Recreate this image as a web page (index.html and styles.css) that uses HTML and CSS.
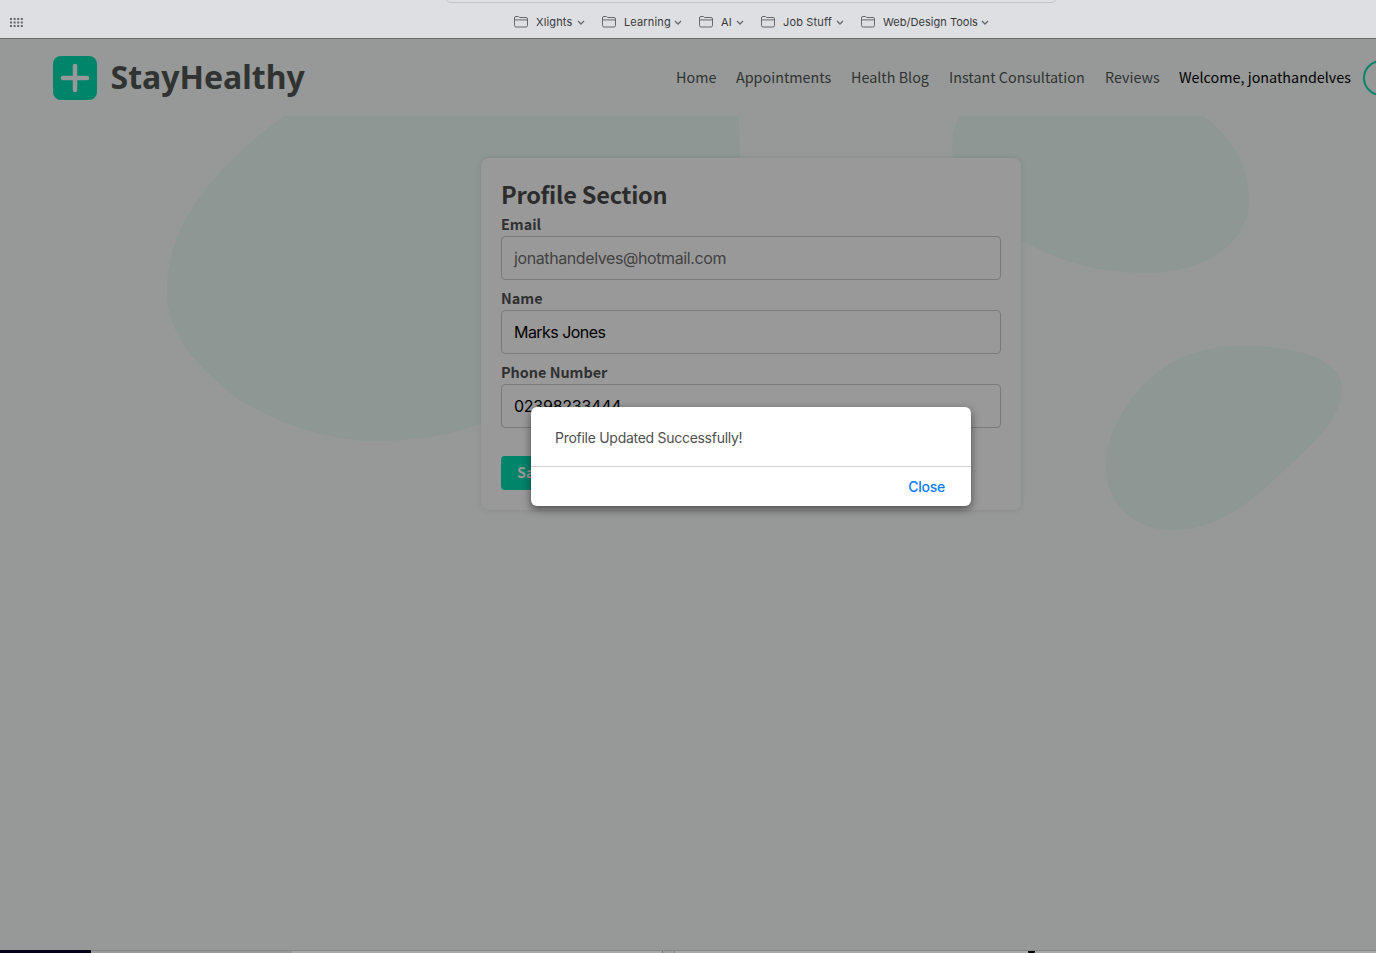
FILE: index.html
```html
<!DOCTYPE html>
<html lang="en">
<head>
<meta charset="utf-8">
<title>StayHealthy</title>
<link rel="stylesheet" href="styles.css">
</head>
<body>
<svg class="symbols" width="0" height="0">
  <symbol id="folder" viewBox="0 0 14 12"><path d="M.5 9.500V2Q.5.5 2 .5h2.200q.6 0 1 .5l.4.5H12q1.500 0 1.500 1.500v6.500q0 1.500-1.500 1.500H2Q.5 11 .5 9.500zM.5 3.900h13"/></symbol>
  <symbol id="chevron" viewBox="0 0 8 5"><path d="M1 1l3 3 3-3"/></symbol>
</svg>
<div class="bookmarks">
  <div class="address-edge"></div>
  <svg class="grid-icon" viewBox="0 0 13 9" width="13" height="9"><path d="M0 1h13M0 4.500h13M0 8h13"/></svg>
  <div class="bookmark-list">
    <div class="bookmark b1"><svg class="folder"><use href="#folder"/></svg><span>Xlights</span><svg class="chevron"><use href="#chevron"/></svg></div>
    <div class="bookmark b2"><svg class="folder"><use href="#folder"/></svg><span>Learning</span><svg class="chevron"><use href="#chevron"/></svg></div>
    <div class="bookmark b3"><svg class="folder"><use href="#folder"/></svg><span>AI</span><svg class="chevron"><use href="#chevron"/></svg></div>
    <div class="bookmark b4"><svg class="folder"><use href="#folder"/></svg><span>Job Stuff</span><svg class="chevron"><use href="#chevron"/></svg></div>
    <div class="bookmark b5"><svg class="folder"><use href="#folder"/></svg><span>Web/Design Tools</span><svg class="chevron"><use href="#chevron"/></svg></div>
  </div>
</div>
<header class="header">
  <div class="brand">
    <svg width="44" height="44" viewBox="0 0 44 44"><rect width="44" height="44" rx="8" fill="#00846a"/><path d="M22 10v24M10 22h24" stroke="#969998" stroke-width="4.500" stroke-linecap="round"/></svg>
    <span class="brand-name">StayHealthy</span>
  </div>
  <nav class="nav">
    <a class="n1">Home</a><a class="n2">Appointments</a><a class="n3">Health Blog</a><a class="n4">Instant Consultation</a><a class="n5">Reviews</a><a class="n6">Welcome, jonathandelves</a>
    <svg class="logout" width="13" height="36" viewBox="0 0 13 36"><circle cx="18" cy="18" r="17"/></svg>
  </nav>
</header>
<main class="page">
  <svg class="blobs" viewBox="0 116 1376 834" width="1376" height="834">
    <path d="M284 116H738.500C741 165 740 195 731 224C700 315 590 380 481 424C450 435 415 441 376 441C325 441 275 421 240 400C195 366 167 335 167 290C167 222 218 165 284 116Z"/>
    <path d="M960 116H1203C1231 136 1249 165 1249 200C1249 243 1205 273 1147 273C1090 273 1050 256 1021 240C950 205 943 145 960 116Z"/>
    <path d="M1244 346C1299 346 1342 360 1342 389C1342 420 1309 447 1280 474C1251 503 1215 530 1173 530C1132 530 1106 502 1106 466C1106 425 1139 379 1177 360C1198 350 1221 346 1244 346Z"/>
  </svg>
  <section class="card">
    <h1>Profile Section</h1>
    <label>Email</label>
    <div class="field muted"><span class="f-email">jonathandelves@hotmail.com</span></div>
    <label>Name</label>
    <div class="field"><span class="f-name">Marks Jones</span></div>
    <label>Phone Number</label>
    <div class="field"><span class="f-phone">02398233444</span></div>
    <button class="save">Save</button>
  </section>
</main>
<div class="dialog">
  <div class="message">Profile Updated Successfully!</div>
  <div class="actions">Close</div>
</div>
<footer class="underlay"><i class="u1"></i><i class="u2"></i><i class="u3"></i><i class="u4"></i><i class="u5"></i><i class="u6"></i></footer>
</body>
</html>
```
FILE: styles.css
```css
* { box-sizing: border-box; }
body {
  margin: 0;
  width: 1376px;
  height: 953px;
  overflow: hidden;
  display: flex;
  flex-direction: column;
  background: #969998;
  font-family: "Noto Sans CJK SC", "Open Sans", sans-serif;
  color: #303331;
}
.symbols { position: absolute; }
.bookmarks {
  position: relative;
  height: 39px;
  flex: none;
  display: flex;
  background: #dedfe2;
  border-bottom: 1px solid #6c716f;
  font: 400 11px/14px Inter, sans-serif;
  color: #38393c;
}
.address-edge {
  position: absolute;
  left: 444px;
  top: -17px;
  width: 614px;
  height: 20px;
  border: 1px solid #c3c4c7;
  border-radius: 7px;
}
.grid-icon {
  margin: 18px 0 0 10px;
  stroke: #65666b;
  stroke-width: 2;
  stroke-dasharray: 2 1.600;
}
.bookmark-list { display: flex; margin: 15px 0 0 491px; }
.bookmark { display: flex; align-items: center; height: 14px; white-space: nowrap; }
.bookmark span { margin-left: 8px; flex: 1; letter-spacing: .15px; }
.bookmark svg { fill: none; stroke: #67686b; flex: none; }
.folder { width: 14px; height: 12px; }
.bookmark .chevron { width: 8px; height: 5px; stroke-width: 1.300; }
.b1 { width: 71px; margin-right: 17px; }
.b2 { width: 80px; margin-right: 17px; }
.b3 { width: 45px; margin-right: 17px; }
.b4 { width: 83px; margin-right: 17px; }
.b5 { width: 128px; }
.b5 span { letter-spacing: .03px; }
.header {
  height: 77px;
  flex: none;
  display: flex;
  align-items: center;
  justify-content: space-between;
  padding-left: 53px;
}
.brand { display: flex; align-items: center; gap: 14px; }
.brand-name { font: 700 32px/44px "Noto Sans", sans-serif; padding-bottom: 2px; margin-left: -.5px; }
.nav { display: flex; align-items: center; font-size: 14.35px; line-height: 24px; white-space: nowrap; }
.nav a { flex: none; margin-right: 20px; padding-bottom: 1px; }
.n1 { width: 40px; }
.n2 { width: 95px; }
.n3 { width: 78px; }
.n4 { width: 136px; }
.n5 { width: 54px; }
.nav .n6 { width: 172px; margin-right: 12px; color: #000; }
.logout { flex: none; fill: none; stroke: #00846a; stroke-width: 2; }
.page { position: relative; height: 834px; flex: none; padding: 42px 0 0 481px; }
.blobs { position: absolute; inset: 0; fill: #8d9793; }
.card {
  position: relative;
  width: 540px;
  height: 352px;
  padding: 20px;
  background: #999;
  border-radius: 8px;
  box-shadow: 0 0 6px rgba(0, 0, 0, .1);
}
h1 { margin: 0; height: 35px; font-size: 23.5px; line-height: 33px; letter-spacing: -.22px; font-weight: 700; color: #2c2c2d; }
label { display: block; height: 22px; font-size: 14.4px; line-height: 21px; font-weight: 700; color: #303031; }
h1 + label { height: 23px; }
.field {
  height: 44px;
  margin-bottom: 7px;
  padding: 0 12px;
  border: 1px solid #7a7a7a;
  border-radius: 4px;
  font: 16px/42px Inter, sans-serif;
  color: #000;
}
.field + label { height: 23px; }
.muted { color: #424242; }
.f-email { letter-spacing: -.4px; }
.f-name { letter-spacing: -.55px; }
.f-phone { letter-spacing: -.25px; }
.save {
  display: block;
  margin-top: 28px;
  width: 70px;
  height: 34px;
  padding: 0 0 2px 16px;
  border: 0;
  border-radius: 4px;
  background: #00846a;
  color: #999;
  text-align: left;
  font: 700 14.4px/32px "Noto Sans CJK SC", sans-serif;
}
.dialog {
  position: absolute;
  left: 531px;
  top: 407px;
  width: 440px;
  height: 99px;
  border-radius: 6px;
  background: #fff;
  box-shadow: 0 3px 8px rgba(0, 0, 0, .5);
  font: 14px/20px Inter, sans-serif;
}
.message { height: 60px; padding: 21px 24px 0; border-bottom: 1px solid #d0d1d1; color: #505050; letter-spacing: -.28px; }
.actions { padding: 10px 26px 0; text-align: right; color: #087cf0; font-weight: 500; letter-spacing: -.25px; }
.underlay { height: 3px; flex: none; display: flex; background: #aaa; border-top: 1px solid #858786; }
.underlay i { height: 3px; }
.u1 { width: 91px; background: #030019; margin-top: -1px; }
.u2 { width: 201px; background: #989a9b; }
.u3 { width: 370px; background: #aaa; }
.u4 { width: 13px; background: #a0a0a0; border-left: 1px solid #777; border-right: 1px solid #888; }
.u5 { width: 353px; }
.u6 { width: 7px; background: #000; border-radius: 0 0 3px 3px; }
```
